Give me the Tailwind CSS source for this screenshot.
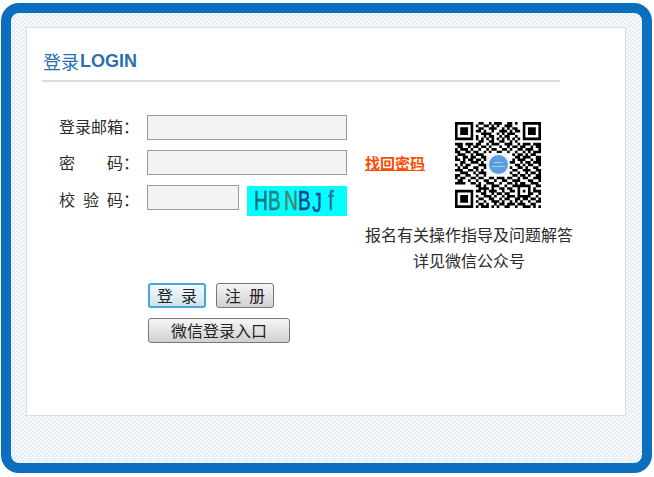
<!DOCTYPE html>
<html lang="zh">
<head>
<meta charset="utf-8">
<title>登录</title>
<script src="https://cdn.jsdelivr.net/npm/@tailwindcss/browser@4"></script>
</head>
<body class="bg-white font-['Noto_Sans_CJK_SC','Liberation_Sans',sans-serif] text-[#2b2b2b] overflow-hidden">
<div class="ml-px mt-[3px] h-[470px] w-[651px] rounded-[18px] border-[10px] border-[#0a6fbe] bg-[repeating-linear-gradient(135deg,#dfeaf6_0,#dfeaf6_1.2px,#fbfdff_1.2px,#fbfdff_2.8284px)] pl-[15px] pt-[14px]">
  <div class="h-[389px] w-[600px] border border-[#d5dfe9] bg-white">
    <div class="ml-[15px] mt-[17px] flex h-[37px] w-[518px] items-center border-b-2 border-[#dcdcdc] pl-px pb-[4px] text-[18px] leading-none text-[#2a70ae]">
      <span>登录</span><span class="ml-px font-['Liberation_Sans'] font-bold">LOGIN</span>
    </div>
    <div class="flex pl-[32px] pt-[33px]">
      <div class="w-[306px] shrink-0">
        <div class="flex flex-col gap-[10px]">
          <div class="flex h-[25px] items-center">
            <span class="-mt-[3px] flex w-[64px] justify-between"><span>登</span><span>录</span><span>邮</span><span>箱</span></span><span class="-mt-[3px] w-[24px]">：</span>
            <div class="h-[25px] w-[200px] border border-[#9a9a9a] bg-[#f3f3f3]"></div>
          </div>
          <div class="flex h-[25px] items-center">
            <span class="-mt-[2px] flex w-[64px] justify-between"><span>密</span><span>码</span></span><span class="-mt-[2px] w-[24px]">：</span>
            <div class="h-[25px] w-[200px] border border-[#9a9a9a] bg-[#f3f3f3]"></div>
          </div>
          <div class="flex h-[31px] items-start">
            <span class="mt-[2px] flex w-[64px] justify-between"><span>校</span><span>验</span><span>码</span></span><span class="mt-[2px] w-[24px]">：</span>
            <div class="h-[25px] w-[92px] border border-[#9a9a9a] bg-[#f3f3f3]"></div>
            <div class="ml-[8px] mt-px flex h-[30px] w-[100px] items-center bg-[#00ffff] pl-[5px] font-['Liberation_Sans'] text-[27px] leading-none [-webkit-text-stroke:0.6px]">
              <span class="w-[14px] scale-x-[.7] text-center text-[#1b6a82] blur-[0.4px]">H</span>
              <span class="w-[14px] scale-x-[.7] text-center text-[#2f7d7c] blur-[0.4px]">B</span>
              <span class="ml-[2px] w-[14px] scale-x-[.7] text-center text-[#4a8270] blur-[0.4px]">N</span>
              <span class="w-[14px] scale-x-[.7] text-center text-[#1a3f8a] blur-[0.4px]">B</span>
              <span class="w-[14px] translate-y-[2px] scale-x-[.7] text-center text-[#1a4c9c] blur-[0.4px]">J</span>
              <span class="w-[14px] scale-x-[.7] text-center text-[#3a6a8e] blur-[0.4px]">f</span>
            </div>
          </div>
        </div>
        <div class="ml-[89px] mt-[67px] flex flex-col gap-[10px]">
          <div class="flex gap-[10px]">
            <button class="flex h-[25px] w-[58px] items-center justify-center gap-[8px] rounded-[3px] border-2 border-[#45a5dc] bg-gradient-to-b from-[#f4fafd] to-[#cfe3ef] pb-[2px] text-base leading-none text-[#222]"><span>登</span><span>录</span></button>
            <button class="flex h-[25px] w-[58px] items-center justify-center gap-[8px] rounded-[3px] border border-[#777] bg-gradient-to-b from-[#f6f6f6] to-[#d0d0d0] pb-[2px] text-base leading-none text-[#222]"><span>注</span><span>册</span></button>
          </div>
          <button class="h-[25px] w-[142px] rounded-[3px] border border-[#777] bg-gradient-to-b from-[#f6f6f6] to-[#d0d0d0] pb-[2px] text-base leading-none text-[#222]">微信登录入口</button>
        </div>
      </div>
      <div class="w-[208px] shrink-0 pt-[7px]">
        <div class="flex items-center">
          <a class="-mt-[3px] w-[90px] text-[15px] font-bold text-[#ff4a00] underline">找回密码</a>
          <div class="relative h-[86px] w-[86px]">
            <svg viewBox="0 0 33 33" class="h-[86px] w-[86px]" fill="none" stroke="#000" stroke-width="1.02">
              <path d="M0 .5h7M9 .5h2M13 .5h1M15 .5h3M20 .5h2M23 .5h1M26 .5h7
M0 1.5h1M6 1.5h1M8 1.5h1M11 1.5h2M14 1.5h1M16 1.5h1M19 1.5h3M26 1.5h1M32 1.5h1
M0 2.5h1M2 2.5h3M6 2.5h1M9 2.5h2M13 2.5h3M18 2.5h1M20 2.5h1M22 2.5h2M26 2.5h1M28 2.5h3M32 2.5h1
M0 3.5h1M2 3.5h3M6 3.5h1M8 3.5h2M11 3.5h1M14 3.5h1M17 3.5h3M21 3.5h1M23 3.5h2M26 3.5h1M28 3.5h3M32 3.5h1
M0 4.5h1M2 4.5h3M6 4.5h1M10 4.5h4M16 4.5h1M18 4.5h1M20 4.5h3M26 4.5h1M28 4.5h3M32 4.5h1
M0 5.5h1M6 5.5h1M8 5.5h1M11 5.5h1M13 5.5h2M17 5.5h1M19 5.5h2M23 5.5h1M26 5.5h1M32 5.5h1
M0 6.5h7M8 6.5h1M10 6.5h1M12 6.5h1M14 6.5h1M16 6.5h1M18 6.5h1M20 6.5h1M22 6.5h1M24 6.5h1M26 6.5h7
M9 7.5h2M13 7.5h2M17 7.5h2M21 7.5h1M23 7.5h1
M0 8.5h3M4 8.5h3M8 8.5h2M12 8.5h1M14 8.5h3M19 8.5h3M24 8.5h1M26 8.5h3M30 8.5h3
M1 9.5h2M5 9.5h1M7 9.5h2M10 9.5h2M13 9.5h1M17 9.5h1M20 9.5h1M22 9.5h2M25 9.5h2M29 9.5h1M31 9.5h2
M0 10.5h1M2 10.5h3M6 10.5h1M9 10.5h1M12 10.5h1M14 10.5h2M18 10.5h2M21 10.5h1M24 10.5h2M27 10.5h3M32 10.5h1
M0 11.5h2M4 11.5h2M7 11.5h2M11 11.5h1M13 11.5h1M16 11.5h2M20 11.5h1M23 11.5h1M26 11.5h1M28 11.5h1M30 11.5h3
M1 12.5h3M6 12.5h1M8 12.5h3M22 12.5h1M24 12.5h2M27 12.5h1M29 12.5h2
M0 13.5h1M3 13.5h2M6 13.5h2M10 13.5h2M23 13.5h2M26 13.5h3M31 13.5h2
M0 14.5h2M3 14.5h1M5 14.5h2M8 14.5h2M11 14.5h1M22 14.5h1M24 14.5h3M29 14.5h1M31 14.5h2
M2 15.5h2M6 15.5h3M10 15.5h1M21 15.5h2M25 15.5h1M27 15.5h2M30 15.5h3
M0 16.5h1M2 16.5h1M4 16.5h2M9 16.5h3M23 16.5h2M26 16.5h1M28 16.5h2M32 16.5h1
M1 17.5h1M3 17.5h2M7 17.5h2M11 17.5h1M21 17.5h1M24 17.5h2M27 17.5h1M30 17.5h2
M0 18.5h3M5 18.5h2M8 18.5h1M10 18.5h1M22 18.5h2M26 18.5h3M31 18.5h2
M2 19.5h3M7 19.5h1M9 19.5h3M21 19.5h1M24 19.5h1M27 19.5h1M29 19.5h2M32 19.5h1
M0 20.5h2M4 20.5h2M8 20.5h1M11 20.5h1M22 20.5h2M25 20.5h2M28 20.5h1M31 20.5h2
M0 21.5h1M2 21.5h2M6 21.5h2M9 21.5h2M13 21.5h2M16 21.5h3M20 21.5h2M24 21.5h1M26 21.5h2M30 21.5h3
M1 22.5h2M5 22.5h1M8 22.5h1M11 22.5h2M15 22.5h1M18 22.5h2M22 22.5h3M28 22.5h2M32 22.5h1
M0 23.5h4M6 23.5h2M9 23.5h1M12 23.5h3M17 23.5h1M20 23.5h2M23 23.5h1M25 23.5h2M29 23.5h3
M8 24.5h2M11 24.5h1M14 24.5h3M19 24.5h1M22 24.5h7M31 24.5h2
M9 25.5h4M14 25.5h1M17 25.5h2M20 25.5h2M24 25.5h1M28 25.5h1M30 25.5h1
M0 26.5h7M8 26.5h2M11 26.5h1M13 26.5h3M18 26.5h1M21 26.5h2M24 26.5h1M26 26.5h1M28 26.5h1M30 26.5h3
M0 27.5h1M6 27.5h1M10 27.5h2M14 27.5h1M16 27.5h2M19 27.5h2M24 27.5h1M28 27.5h2M32 27.5h1
M0 28.5h1M2 28.5h3M6 28.5h1M8 28.5h1M11 28.5h3M15 28.5h1M18 28.5h1M20 28.5h3M24 28.5h5M31 28.5h1
M0 29.5h1M2 29.5h3M6 29.5h1M9 29.5h2M13 29.5h2M17 29.5h1M19 29.5h2M23 29.5h2M26 29.5h2M29 29.5h2M32 29.5h1
M0 30.5h1M2 30.5h3M6 30.5h1M8 30.5h1M11 30.5h1M14 30.5h3M18 30.5h1M21 30.5h1M23 30.5h1M25 30.5h1M28 30.5h1M31 30.5h2
M0 31.5h1M6 31.5h1M9 31.5h2M12 31.5h1M15 31.5h1M17 31.5h2M20 31.5h3M24 31.5h3M29 31.5h2
M0 32.5h7M8 32.5h1M10 32.5h3M14 32.5h1M16 32.5h1M19 32.5h2M23 32.5h1M26 32.5h3M30 32.5h1M32 32.5h1"/>
            </svg>
            <div class="absolute left-[32px] top-[31px] flex h-[22px] w-[22px] items-center justify-center bg-[#f2f5f8]">
              <div class="flex h-[19px] w-[19px] flex-col items-center justify-center gap-[3px] rounded-full bg-[#5a9ee0]">
                <div class="h-px w-[9px] bg-white/50"></div>
                <div class="h-px w-[13px] bg-white/50"></div>
              </div>
            </div>
          </div>
        </div>
        <div class="mt-[14px] text-center text-base leading-[26px]">
          <p class="-mt-px">报名有关操作指导及问题解答</p>
          <p>详见微信公众号</p>
        </div>
      </div>
    </div>
  </div>
</div>
</body>
</html>
